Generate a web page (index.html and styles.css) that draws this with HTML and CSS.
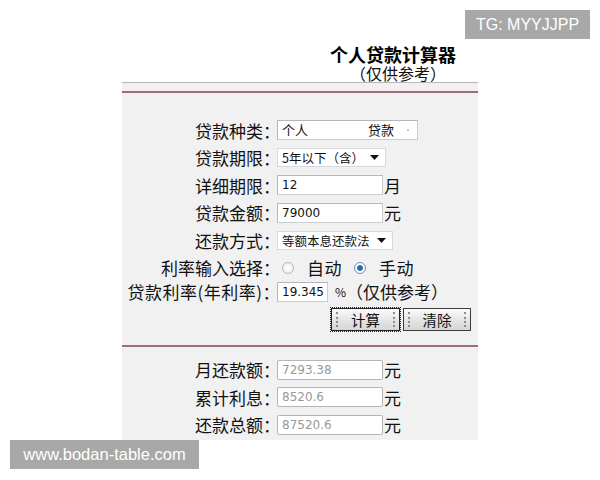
FILE: index.html
```html
<!DOCTYPE html>
<html>
<head>
<meta charset="utf-8">
<link rel="stylesheet" href="styles.css">
</head>
<body>
<div class="page">
  <div class="head">
    <div class="title">个人贷款计算器</div>
    <div class="sub">（仅供参考）</div>
  </div>
  <div class="panel">
    <div class="band"></div>
    <div class="form">
      <div class="row"><span class="lab">贷款种类：</span><div class="box w141 kind"><span>个人</span><span class="k2">贷款</span><span class="dot"></span></div></div>
      <div class="row"><span class="lab">贷款期限：</span><div class="sel w109"><span>5年以下（含）</span><svg class="arr" width="9" height="5" viewBox="0 0 9 5"><path d="M0 0H9L4.5 5Z" fill="#111"/></svg></div></div>
      <div class="row"><span class="lab">详细期限：</span><div class="box w106">12</div><span class="unit">月</span></div>
      <div class="row"><span class="lab">贷款金额：</span><div class="box w106">79000</div><span class="unit">元</span></div>
      <div class="row"><span class="lab">还款方式：</span><div class="sel w116"><span>等额本息还款法</span><svg class="arr" width="9" height="5" viewBox="0 0 9 5"><path d="M0 0H9L4.5 5Z" fill="#111"/></svg></div></div>
      <div class="row"><span class="lab">利率输入选择：</span><span class="radio"></span><span class="rtxt">自动</span><span class="radio on"></span><span class="rtxt">手动</span></div>
      <div class="row r7"><span class="lab">贷款利率(年利率)：</span><div class="box w51">19.345</div><span class="pct">%</span><span class="note">（仅供参考）</span></div>
      <div class="btns"><button class="btn focus">计算</button><button class="btn">清除</button></div>
    </div>
    <div class="rule"></div>
    <div class="form res">
      <div class="row"><span class="lab">月还款额：</span><div class="box w106 ro">7293.38</div><span class="unit">元</span></div>
      <div class="row"><span class="lab">累计利息：</span><div class="box w106 ro">8520.6</div><span class="unit">元</span></div>
      <div class="row"><span class="lab">还款总额：</span><div class="box w106 ro">87520.6</div><span class="unit">元</span></div>
    </div>
  </div>
</div>
<div class="wm tg">TG: MYYJJPP</div>
<div class="wm site">www.bodan-table.com</div>
</body>
</html>
```
FILE: styles.css
```css
html, body { margin: 0; padding: 0; background: #fff; }
body {
  width: 600px; height: 480px; overflow: hidden; position: relative;
  font-family: "Noto Sans CJK SC", "DejaVu Sans", sans-serif; color: #111;
}
.page { padding-top: 44px; }
.head { margin-left: 329px; width: 128px; text-align: center; }
.title { font-size: 18px; font-weight: bold; line-height: 20px; color: #000; white-space: nowrap; }
.sub { font-size: 16px; line-height: 18px; white-space: nowrap; margin-left: 10px; }
.panel {
  margin-left: 122px; width: 356px; height: 357px;
  background: #f1f1f1; border-top: 1px solid #b8b8b8;
}
.band { height: 8px; background: #f4eff1; border-bottom: 2px solid #9d6f7f; }
.form { padding-top: 23.5px; }
.row { height: 27.5px; display: flex; align-items: center; }
.lab {
  flex: none; width: 158px; margin-right: -3px; text-align: right;
  font-size: 17px; white-space: nowrap; color: #111;
}
.r7 { height: 20px; }
.r7 .lab { letter-spacing: 0.5px; }
.box {
  flex: none; box-sizing: border-box; height: 20px; background: #fff;
  border: 1px solid #c9ccd0; border-top-color: #b3b7bc; border-left-color: #b3b7bc;
  font-size: 12px; line-height: 18px; padding-left: 4px;
  font-family: "DejaVu Sans", "Noto Sans CJK SC", sans-serif; color: #111;
}
.w141 { width: 141px; }
.w106 { width: 106px; }
.w51 { width: 51px; }
.w109 { width: 109px; }
.w116 { width: 116px; }
.kind { display: flex; align-items: center; font-family: "Noto Sans CJK SC", sans-serif; font-size: 13px; position: relative; }
.k2 { margin-left: 60px; }
.dot { position: absolute; right: 8px; top: 8px; width: 2px; height: 2px; background: #c8c8c8; }
.sel {
  flex: none; box-sizing: border-box; height: 19px; background: #fff; border: 1px solid #d8d8d8;
  display: flex; align-items: center; justify-content: space-between;
  padding: 0 6px 0 4px; font-size: 12.5px; white-space: nowrap;
}
.arr { flex: none; }
.unit { font-size: 17px; margin-left: 1px; }
.radio {
  flex: none; width: 10px; height: 10px; border-radius: 50%; border: 1px solid #b8b8b8;
  background: radial-gradient(circle, #fff 0, #e8e8e8 100%);
  margin-left: 5px; margin-right: 13px;
}
.radio.on { border-color: #7a8ea6; background: radial-gradient(circle, #1d5d9e 0, #3a7bbf 38%, #fff 46%, #e6eef6 100%); margin-left: 12px; }
.rtxt { font-size: 17px; letter-spacing: 0.5px; }
.pct { font-size: 12px; margin-left: 7px; }
.note { font-size: 17px; margin-left: 0; }
.btns { margin-top: 6.5px; display: flex; gap: 3px; margin-left: 209px; }
.btn {
  box-sizing: border-box; width: 69px; height: 23px; padding: 0;
  border: 1px solid #3b3b3b;
  background: linear-gradient(#fcfcfc, #e4e4e4 55%, #d5d5d5);
  font-family: "Noto Sans CJK SC", sans-serif; font-size: 14.5px; color: #111;
  position: relative; line-height: 21px;
}
.btn::before, .btn::after {
  content: ""; position: absolute; top: 3px; bottom: 3px; width: 0;
  border-left: 2px dotted #8a8a8a;
}
.btn::before { left: 4px; }
.btn::after { right: 4px; }
.btn + .btn { width: 68px; }
.focus { outline: 1px dotted #222; outline-offset: 0; border-color: #222; }
.rule { margin-top: 14px; height: 2px; background: #9d6f7f; }
.res { padding-top: 9px; }
.ro { color: #999; border-color: #b5b5b5; border-radius: 2px; }
.wm {
  position: absolute; background: #a8a8a8; color: #fff;
  font-family: "Liberation Sans", "DejaVu Sans", sans-serif;
  display: flex; align-items: center; justify-content: center;
}
.tg { left: 465px; top: 10px; width: 125px; height: 29px; font-size: 16px; }
.site { left: 10px; top: 440px; width: 189px; height: 29px; font-size: 16.5px; }
```
